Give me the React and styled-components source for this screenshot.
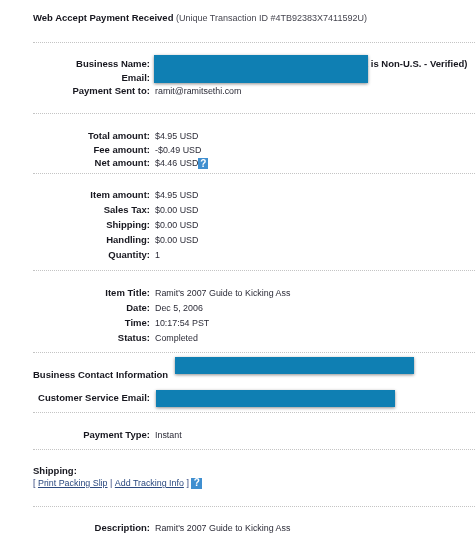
import React from "react";
import styled, { createGlobalStyle } from "styled-components";

const GlobalStyle = createGlobalStyle`
  html, body {
    margin: 0;
    padding: 0;
    background: #fff;
  }
`;

const Page = styled.div`
  width: 475px;
  height: 540px;
  overflow: hidden;
  padding-left: 33px;
  box-sizing: border-box;
  font-family: "Liberation Sans", Arial, sans-serif;
  font-size: 8.9px;
  color: #2c2c38;
  filter: blur(0.4px);
`;

const Heading = styled.div`
  height: 42px;
  padding-top: 12px;
  box-sizing: border-box;
  line-height: 12px;
  font-size: 9px;
  color: #45454f;
`;

const Strong = styled.b`
  font-size: 9.5px;
  color: #17171f;
`;

const Section = styled.section`
  position: relative;
  height: ${(p) => p.$h}px;
  padding-top: ${(p) => p.$top}px;
  box-sizing: border-box;
  border-top: 1px dotted #c4c4c4;
`;

const Row = styled.div`
  display: grid;
  grid-template-columns: 117px 1fr;
  column-gap: 5px;
  align-items: baseline;
  height: ${(p) => p.$h || 15}px;
  line-height: ${(p) => p.$h || 15}px;
  white-space: nowrap;
`;

const Label = styled.div`
  font-size: 9.5px;
  font-weight: bold;
  text-align: right;
  color: #17171f;
`;

const Value = styled.div`
  display: flex;
  align-items: center;
`;

const Verified = styled.b`
  margin-left: 210px;
  font-size: 9.5px;
  color: #17171f;
`;

const Plain = styled.div`
  font-size: 9.5px;
  font-weight: bold;
  height: ${(p) => p.$h}px;
  line-height: ${(p) => p.$h}px;
  margin-bottom: ${(p) => p.$after || 0}px;
  color: #17171f;
`;

const Links = styled.div`
  display: flex;
  align-items: center;
  gap: 2.5px;
  line-height: 12px;
  color: #2c3f78;
`;

const TrackLink = styled.a`
  color: #2c4a80;
  text-decoration: underline;
`;

const Help = styled.span`
  display: inline-flex;
  align-items: center;
  justify-content: center;
  width: ${(p) => p.$size}px;
  height: 11px;
  margin-left: ${(p) => p.$gap}px;
  background: #3f8fd0;
  color: #fff;
  font-weight: bold;
  font-size: 10px;
`;

const Redaction = styled.div`
  position: absolute;
  left: ${(p) => p.$left}px;
  top: ${(p) => p.$top}px;
  width: ${(p) => p.$w}px;
  height: ${(p) => p.$h}px;
  background: #0f7fb3;
  box-shadow: 0 1px 3px rgba(0, 0, 0, 0.45);
`;

const Field = ({ label, h, children }) => (
  <Row $h={h}>
    <Label>{label}</Label>
    <Value>{children}</Value>
  </Row>
);

export default function App() {
  return (
    <>
      <GlobalStyle />
      <Page>
        <Heading>
          <Strong>Web Accept Payment Received</Strong> (Unique Transaction ID #4TB92383X7411592U)
        </Heading>
        <Section $h={71} $top={13}>
          <Field label="Business Name:">
            <Verified>t is Non-U.S. - Verified)</Verified>
          </Field>
          <Field label="Email:" h={14} />
          <Field label="Payment Sent to:" h={11}>ramit@ramitsethi.com</Field>
          <Redaction $left={121} $top={12} $w={214} $h={28} />
        </Section>
        <Section $h={60} $top={14}>
          <Field label="Total amount:">$4.95 USD</Field>
          <Field label="Fee amount:" h={14}>-$0.49 USD</Field>
          <Field label="Net amount:" h={11}>
            $4.46 USD<Help $size={10} $gap={0}>?</Help>
          </Field>
        </Section>
        <Section $h={97} $top={13}>
          <Field label="Item amount:">$4.95 USD</Field>
          <Field label="Sales Tax:">$0.00 USD</Field>
          <Field label="Shipping:">$0.00 USD</Field>
          <Field label="Handling:">$0.00 USD</Field>
          <Field label="Quantity:">1</Field>
        </Section>
        <Section $h={82} $top={14}>
          <Field label="Item Title:">Ramit's 2007 Guide to Kicking Ass</Field>
          <Field label="Date:">Dec 5, 2006</Field>
          <Field label="Time:">10:17:54 PST</Field>
          <Field label="Status:">Completed</Field>
        </Section>
        <Section $h={60} $top={14}>
          <Plain $h={15} $after={8}>Business Contact Information</Plain>
          <Redaction $left={142} $top={4} $w={239} $h={17} />
          <Field label="Customer Service Email:" h={15} />
          <Redaction $left={123} $top={37} $w={239} $h={17} />
        </Section>
        <Section $h={37} $top={14}>
          <Field label="Payment Type:">Instant</Field>
        </Section>
        <Section $h={57} $top={15}>
          <Plain $h={12}>Shipping:</Plain>
          <Links>
            [ <TrackLink>Print Packing Slip</TrackLink> | <TrackLink>Add Tracking Info</TrackLink> ]
            <Help $size={11} $gap={0}>?</Help>
          </Links>
        </Section>
        <Section $h={40} $top={13}>
          <Field label="Description:">Ramit's 2007 Guide to Kicking Ass</Field>
        </Section>
      </Page>
    </>
  );
}
